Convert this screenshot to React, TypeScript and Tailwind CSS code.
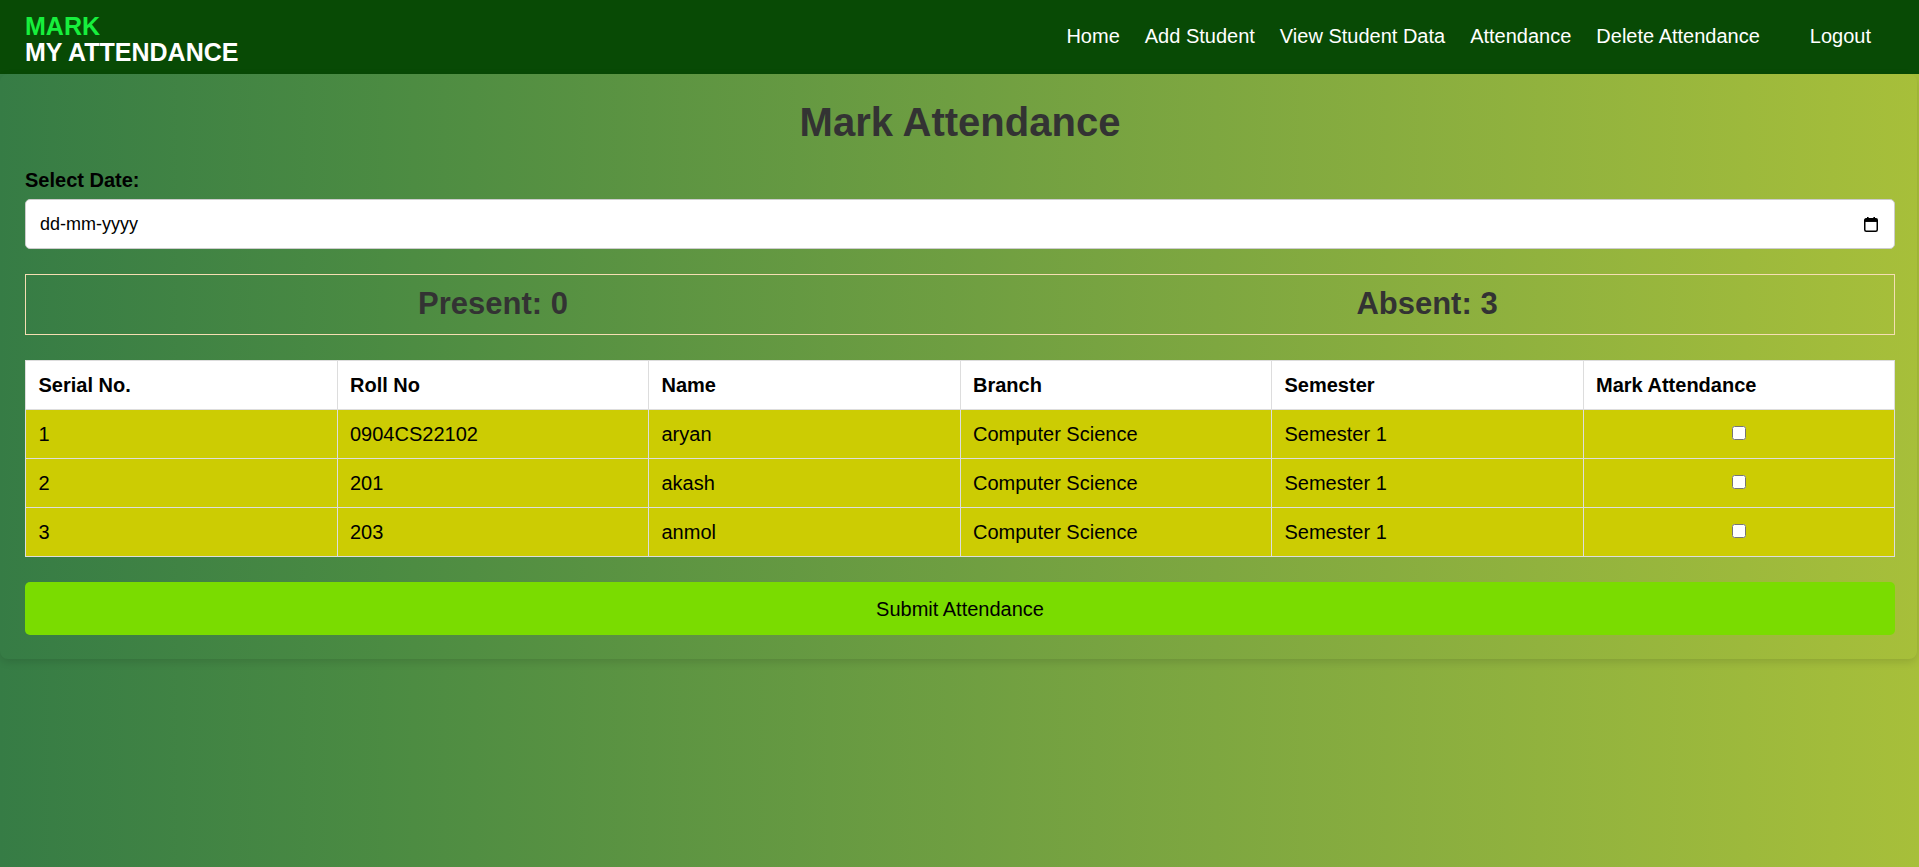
import { useState } from 'react';

// 学生考勤标记页面
const students = [
    { id: 1, roll: '0904CS22102', name: 'aryan', branch: 'Computer Science', semester: 'Semester 1' },
    { id: 2, roll: '201', name: 'akash', branch: 'Computer Science', semester: 'Semester 1' },
    { id: 3, roll: '203', name: 'anmol', branch: 'Computer Science', semester: 'Semester 1' },
];

const navLinks = ['Home', 'Add Student', 'View Student Data', 'Attendance', 'Delete Attendance'];

function CalendarIcon() {
    return (
        <svg width="14" height="15" viewBox="0 0 14 15" fill="none">
            <rect x="3" y="0" width="1.6" height="2.5" fill="#000" />
            <rect x="9.4" y="0" width="1.6" height="2.5" fill="#000" />
            <rect x="0.75" y="1.75" width="12.5" height="12.5" rx="1.5" stroke="#000" strokeWidth="1.5" />
            <rect x="0.75" y="1.75" width="12.5" height="3.2" fill="#000" />
        </svg>
    );
}

export default function App() {
    const [marked, setMarked] = useState<Record<number, boolean>>({});
    const present = students.filter((s) => marked[s.id]).length;
    const absent = students.length - present;

    return (
        <div className="min-h-screen bg-linear-to-r from-[#367c45] via-[#4b8b42] via-20% to-[#a7bf3a] font-['Liberation_Sans',Arial,sans-serif]">
            <header className="h-[74px] bg-[#084a05] flex items-center justify-between pl-[25px] pr-[48px]">
                <div className="mt-[4px] font-bold text-[25px] leading-[26px]">
                    <div className="text-[#17ef3d]">MARK</div>
                    <div className="text-white">MY ATTENDANCE</div>
                </div>
                <nav className="flex items-center gap-[25px] text-white text-[20px] leading-[23px] mb-[2px]">
                    {navLinks.map((l) => (
                        <a key={l} href="#" className="hover:underline">{l}</a>
                    ))}
                    <a href="#" className="ml-[25px] hover:underline">Logout</a>
                </nav>
            </header>

            <main className="mr-[2px] rounded-lg pt-[25px] pb-[24px] pl-[25px] pr-[22px] shadow-[0_3px_8px_rgba(0,0,0,0.12)]">
                <h2 className="text-center text-[40px] leading-[46px] font-bold text-[#333]">Mark Attendance</h2>

                <label className="block mt-[24px] mb-[7px] text-[20px] leading-[23px] font-bold text-black">Select Date:</label>
                <div className="h-[50px] bg-white border border-[#ccc] rounded-[5px] flex items-center justify-between pl-[14px] pr-[16px] text-[18px] text-black">
                    <span>dd-mm-yyyy</span>
                    <CalendarIcon />
                </div>

                <div className="mt-[25px] h-[61px] border border-[#f5deb3] flex items-center text-[31px] font-bold text-[#333]">
                    <div className="flex-1 text-center">Present: {present}</div>
                    <div className="flex-1 text-center">Absent: {absent}</div>
                </div>

                <table className="mt-[25px] w-full table-fixed border-collapse text-[20px] leading-[23px] text-black">
                    <thead>
                        <tr className="bg-white">
                            {['Serial No.', 'Roll No', 'Name', 'Branch', 'Semester', 'Mark Attendance'].map((h) => (
                                <th key={h} className="border border-[#ddd] px-[12.5px] py-[12.5px] text-left font-bold">{h}</th>
                            ))}
                        </tr>
                    </thead>
                    <tbody>
                        {students.map((s, i) => (
                            <tr key={s.id} className="bg-[#cccc03]">
                                <td className="border border-[#ddd] px-[12.5px] py-[12.5px]">{i + 1}</td>
                                <td className="border border-[#ddd] px-[12.5px] py-[12.5px]">{s.roll}</td>
                                <td className="border border-[#ddd] px-[12.5px] py-[12.5px]">{s.name}</td>
                                <td className="border border-[#ddd] px-[12.5px] py-[12.5px]">{s.branch}</td>
                                <td className="border border-[#ddd] px-[12.5px] py-[12.5px]">{s.semester}</td>
                                <td className="border border-[#ddd] px-[12.5px] py-[12.5px] text-center">
                                    <input
                                        type="checkbox"
                                        className="w-[14px] h-[14px] align-[1px]"
                                        checked={!!marked[s.id]}
                                        onChange={(e) => setMarked({ ...marked, [s.id]: e.target.checked })}
                                    />
                                </td>
                            </tr>
                        ))}
                    </tbody>
                </table>

                <button className="mt-[25px] w-full h-[53px] bg-[#7adc00] rounded-[5px] text-[20px] text-black">
                    Submit Attendance
                </button>
            </main>
        </div>
    );
}
